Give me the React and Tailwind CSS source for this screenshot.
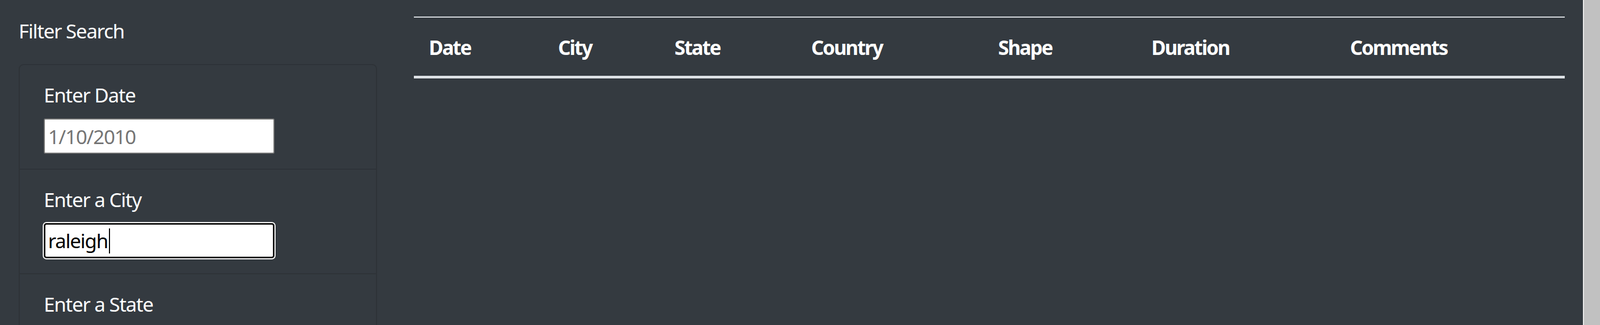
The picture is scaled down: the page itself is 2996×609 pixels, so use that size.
import React from "react";

const columns = [
  { label: "Date", w: "w-[242px]" },
  { label: "City", w: "w-[218px]" },
  { label: "State", w: "w-[256px]" },
  { label: "Country", w: "w-[350px]" },
  { label: "Shape", w: "w-[287px]" },
  { label: "Duration", w: "w-[372px]" },
  { label: "Comments", w: "w-[430px]" },
];

const FilterItem = ({ label, children, last }) => (
  <li
    className={
      "px-[45px] pt-[28px] pb-[28px] " +
      (last ? "" : "border-b-2 border-[#2e3338]")
    }
  >
    <label className="block mb-[17px] leading-[55px]">{label}</label>
    {children}
  </li>
);

const App = () => {
  return (
    <div className="flex h-[609px] w-[2996px] overflow-hidden bg-[#343a40] text-[37px] tracking-[-1.3px] text-white font-['Segoe_UI','Noto_Sans',sans-serif]">
      <div className="flex flex-1 items-start">
        {/* filter sidebar */}
        <aside className="w-[706px] shrink-0 pl-[35px]">
          <h5 className="pt-[30px] leading-[55px] font-normal">Filter Search</h5>
          <ul className="mt-[35px] rounded-[9px] border-2 border-[#2e3338]">
            <FilterItem label="Enter Date">
              <input
                type="text"
                placeholder="1/10/2010"
                className="block h-[66px] w-[432px] rounded-[3px] border-2 border-[#767676] bg-white px-[6px] text-black placeholder:text-[#757575] outline-none"
              />
            </FilterItem>
            <FilterItem label="Enter a City">
              <div className="flex h-[66px] w-[432px] items-center rounded-[5px] border-[3px] border-[#101010] bg-white px-[5px] text-black shadow-[0_0_0_2px_#ffffff]">
                <span>raleigh</span>
                <span className="ml-[2px] inline-block h-[47px] w-[2px] bg-black" />
              </div>
            </FilterItem>
            <FilterItem label="Enter a State" last>
              <div className="h-[66px]" />
            </FilterItem>
          </ul>
        </aside>

        {/* results table */}
        <main className="ml-[69px] mr-[34px] mt-[31px] flex-1">
          <table className="w-full table-fixed border-collapse">
            <thead>
              <tr>
                {columns.map((c) => (
                  <th
                    key={c.label}
                    className={
                      c.w +
                      " border-t-2 border-b-[5px] border-[#dee2e6] px-[28px] pt-[28px] pb-[26px] text-left font-bold tracking-[-2.2px] leading-[55px]"
                    }
                  >
                    {c.label}
                  </th>
                ))}
              </tr>
            </thead>
            <tbody />
          </table>
        </main>
      </div>

      {/* browser scrollbar */}
      <div className="w-[32px] shrink-0 border-l-2 border-[#ececec] bg-[#c1c1c1]" />
    </div>
  );
};

export default App;
